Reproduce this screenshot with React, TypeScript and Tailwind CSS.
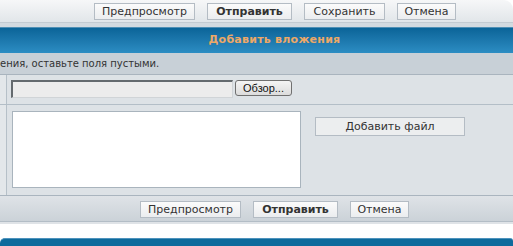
const btn =
  "h-[17px] flex items-center justify-center border border-[#b4bcc4] bg-gradient-to-b from-[#fbfbfb] to-[#ebedef] text-[11px] text-[#333] leading-none";

function ToolbarButtons({ save }: { save?: boolean }) {
  return (
    <div className="flex gap-3">
      <button className={`${btn} w-[101px]`}>Предпросмотр</button>
      <button className={`${btn} w-[85px] font-bold text-[#222]`}>Отправить</button>
      {save && <button className={`${btn} w-[81px]`}>Сохранить</button>}
      <button className={`${btn} w-[59px]`}>Отмена</button>
    </div>
  );
}

export default function App() {
  return (
    <div className="w-[513px] h-[246px] overflow-hidden bg-white font-['DejaVu_Sans',Verdana,sans-serif] text-[#333]">
      {/* top toolbar */}
      <div className="h-[27px] rounded-tr-[9px] bg-gradient-to-b from-[#f6f7f8] to-[#dde2e6] flex flex-col">
        <div className="h-[23px] pl-[94px] pt-[3px] border-b border-[#c3cbd2]">
          <ToolbarButtons save />
        </div>
        <div className="flex-1 bg-[#d3dae0]" />
      </div>

      {/* header */}
      <div className="h-[26px] bg-gradient-to-b from-[#0a6498] to-[#2c8dc3] border-t border-[#4f8fb5] flex items-center justify-center pl-[36px]">
        <span className="text-[11px] font-bold tracking-[0.25px] text-[#eda867]">Добавить вложения</span>
      </div>

      {/* hint */}
      <div className="h-[22px] bg-[#c8d0d7] border-b border-[#a9b4be] flex items-center text-[10px] text-[#333]">
        ения, оставьте поля пустыми.
      </div>

      {/* file row */}
      <div className="flex h-[30px] bg-[#dde2e6] border-b border-[#b3bec7]">
        <div className="w-[7px] bg-[#e3e7ea] border-r border-[#b6c0c8]" />
        <div className="flex items-start pt-[5px] pl-[4px]">
          <div className="w-[222px] h-[18px] bg-[#ececec] border-t-2 border-l-2 border-t-[#646a6e] border-l-[#646a6e] border-r border-b border-r-[#d0d4d7] border-b-[#d0d4d7]" />
          <button className="ml-[2px] w-[57px] h-[16px] rounded-[3px] border border-[#707070] bg-gradient-to-b from-[#f4f4f4] to-[#dcdcdc] text-[11px] leading-none font-['Liberation_Sans',Arial,sans-serif] text-[#111] flex items-center justify-center">
            Обзор...
          </button>
        </div>
      </div>

      {/* textarea row */}
      <div className="flex h-[91px] bg-[#dde2e6] border-b border-[#aab5bf]">
        <div className="w-[7px] bg-[#e3e7ea] border-r border-[#b6c0c8]" />
        <div className="flex items-start pt-[6px] pl-[5px]">
          <textarea className="w-[289px] h-[77px] bg-white border border-[#a9b4bd] resize-none outline-none" />
          <button className="ml-[14px] mt-[6px] w-[150px] h-[19px] border border-[#b4bcc4] bg-[#eceeef] text-[11px] text-[#333] leading-none flex items-center justify-center">
            Добавить файл
          </button>
        </div>
      </div>

      {/* bottom toolbar */}
      <div className="h-[26px] bg-gradient-to-b from-[#dfe3e7] to-[#cbd2d8] border-b border-[#b3bdc6] pl-[140px] pt-[5px]">
        <ToolbarButtons />
      </div>
      <div className="h-[2px] bg-[#dfe3e7]" />

      <div className="h-[14px] bg-white" />

      {/* footer bar */}
      <div className="h-[9px] rounded-tl-[5px] rounded-tr-[3px] bg-[#0e6a9c] border-t border-[#4e93bd]" />
    </div>
  );
}
